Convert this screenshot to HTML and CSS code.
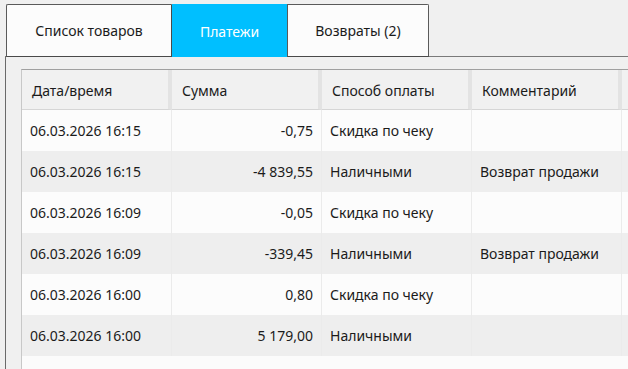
FILE: index.html
```html
<!DOCTYPE html>
<html lang="ru">
<head>
<meta charset="utf-8">
<link rel="stylesheet" href="styles.css">
</head>
<body>
<div class="window">
  <div class="tabs">
    <div class="tab tab-first">Список товаров</div>
    <div class="tab tab-active">Платежи</div>
    <div class="tab tab-last">Возвраты (2)</div>
  </div>
  <div class="panel">
    <div class="grid">
      <div class="hcell">Дата/время</div>
      <div class="hcell">Сумма</div>
      <div class="hcell">Способ оплаты</div>
      <div class="hcell">Комментарий</div>
      <div class="hcell hlast"></div>

      <div class="cell">06.03.2026 16:15</div>
      <div class="cell num">-0,75</div>
      <div class="cell">Скидка по чеку</div>
      <div class="cell"></div>
      <div class="cell"></div>

      <div class="cell alt">06.03.2026 16:15</div>
      <div class="cell alt num">-4 839,55</div>
      <div class="cell alt">Наличными</div>
      <div class="cell alt">Возврат продажи</div>
      <div class="cell alt"></div>

      <div class="cell">06.03.2026 16:09</div>
      <div class="cell num">-0,05</div>
      <div class="cell">Скидка по чеку</div>
      <div class="cell"></div>
      <div class="cell"></div>

      <div class="cell alt">06.03.2026 16:09</div>
      <div class="cell alt num">-339,45</div>
      <div class="cell alt">Наличными</div>
      <div class="cell alt">Возврат продажи</div>
      <div class="cell alt"></div>

      <div class="cell">06.03.2026 16:00</div>
      <div class="cell num">0,80</div>
      <div class="cell">Скидка по чеку</div>
      <div class="cell"></div>
      <div class="cell"></div>

      <div class="cell alt">06.03.2026 16:00</div>
      <div class="cell alt num">5 179,00</div>
      <div class="cell alt">Наличными</div>
      <div class="cell alt"></div>
      <div class="cell alt"></div>
    </div>
    <div class="empty"></div>
  </div>
</div>
</body>
</html>
```

FILE: styles.css
```css
html, body {
  margin: 0;
  padding: 0;
  width: 628px;
  height: 369px;
  overflow: hidden;
  background: #f0f0f0;
  font-family: "Noto Sans", "Open Sans", sans-serif;
  font-size: 14px;
  color: #1b1b1b;
}

.window {
  padding-top: 4px;
  height: 365px;
  display: flex;
  flex-direction: column;
}

.tabs {
  display: flex;
  margin-left: 6px;
  height: 52px;
  position: relative;
  z-index: 1;
}

.tab {
  box-sizing: border-box;
  height: 53px;
  display: flex;
  align-items: center;
  justify-content: center;
  background: #fcfcfc;
  border-top: 1px solid #5a5a5a;
  border-bottom: 1px solid #4a4a4a;
}

.tab-first {
  width: 166px;
  border-left: 1px solid #5a5a5a;
  border-right: 1px solid #4a4a4a;
  border-top-left-radius: 2px;
}

.tab-active {
  width: 115px;
  background: #00bfff;
  color: #ffffff;
  border-top-color: #00bfff;
  border-bottom: none;
}

.tab-last {
  width: 142px;
  border-left: 1px solid #5a5a5a;
  border-right: 1px solid #5a5a5a;
  border-top-right-radius: 2px;
}

.panel {
  flex: 1;
  margin-left: 5px;
  border-left: 1px solid #6a6a6a;
  border-top: 1px solid #7a7a7a;
  background: #f0f0f0;
  padding: 12px 0 0 15px;
  display: flex;
  flex-direction: column;
  min-width: 0;
}

.grid {
  display: grid;
  grid-template-columns: 150px 150px 150px 150px 1fr;
  grid-template-rows: 40px;
  grid-auto-rows: 41px;
  border-left: 1px solid #c8c8c8;
  border-top: 1px solid #a0a0a0;
  background: #fcfcfc;
}

.hcell {
  box-sizing: border-box;
  background: #f1f1f1;
  border-right: 4px solid #e3e3e3;
  border-bottom: 1px solid #d6d6d6;
  display: flex;
  align-items: center;
  padding-left: 10px;
  padding-top: 1px;
  white-space: nowrap;
}

.hcell.hlast {
  border-right: none;
  padding-left: 0;
}

.cell {
  box-sizing: border-box;
  background: #fcfcfc;
  border-right: 1px solid #ebebeb;
  display: flex;
  align-items: center;
  padding-left: 8px;
  padding-right: 8px;
  white-space: nowrap;
  min-width: 0;
}

.cell.alt {
  background: #eeeeee;
}

.cell.num {
  justify-content: flex-end;
}

.empty {
  flex: 1;
  background: #fbfbfb;
  border-left: 1px solid #c8c8c8;
}
```
